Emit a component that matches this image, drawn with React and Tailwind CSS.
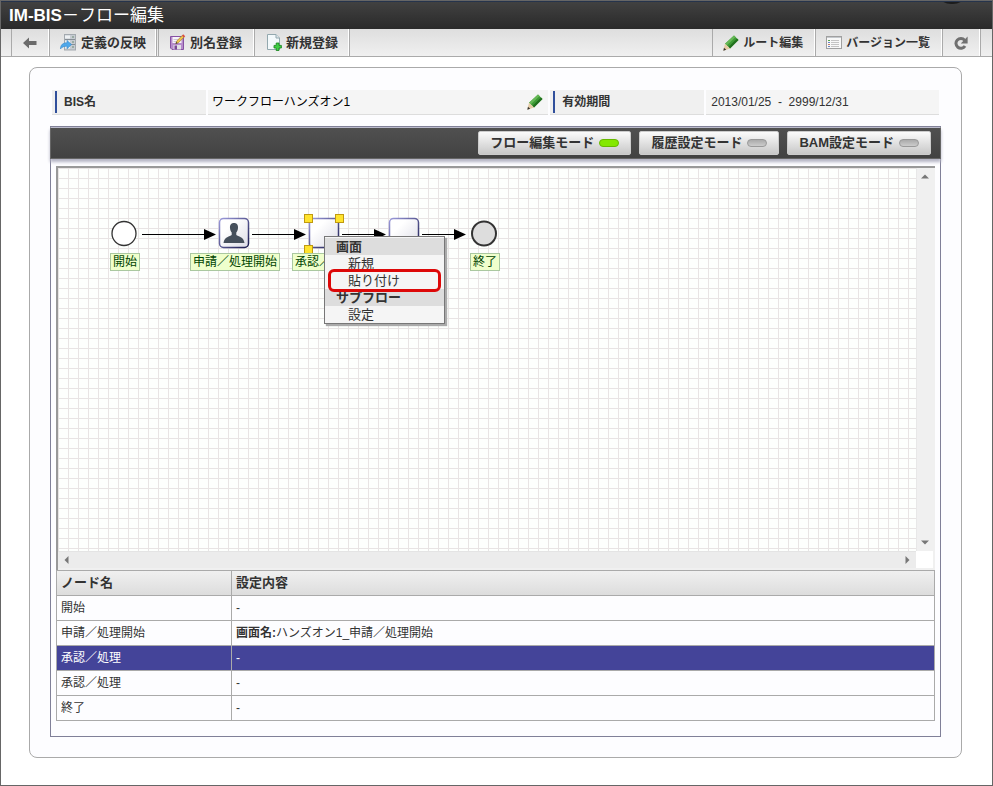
import { useState } from 'react';

const FONT = "font-['Liberation_Sans','Noto_Sans_CJK_JP',sans-serif]";

const NODES = [
  { id: 'start', type: 'start', x: 66,  label: '開始' },
  { id: 'apply', type: 'user',  x: 176, label: '申請／処理開始' },
  { id: 'appr1', type: 'box',   x: 266, label: '承認／処理' },
  { id: 'appr2', type: 'box',   x: 346, label: '承認／処理' },
  { id: 'end',   type: 'end',   x: 426, label: '終了' },
];

const ARROWS = [[84, 158], [194, 248], [284, 328], [364, 408]];

const ROWS = [
  { id: 'start', name: '開始' },
  { id: 'apply', name: '申請／処理開始', title: '画面名:', value: 'ハンズオン1_申請／処理開始' },
  { id: 'appr1', name: '承認／処理' },
  { id: 'appr2', name: '承認／処理' },
  { id: 'end',   name: '終了' },
];

const MODES = [
  { id: 'flow',    label: 'フロー編集モード' },
  { id: 'history', label: '履歴設定モード' },
  { id: 'bam',     label: 'BAM設定モード' },
];

/* ── Icons ── */
function BackIcon() {
  return (
    <svg width="14" height="12" viewBox="0 0 14 12">
      <path d="M0 6 6 0.5V4H13.5V8H6V11.5Z" fill="#6b6b6b" />
    </svg>
  );
}

function ServerIcon() {
  return (
    <svg width="17" height="17" viewBox="0 0 17 17">
      <rect x="4.5" y="0.5" width="11" height="15.5" fill="#c6ccd2" stroke="#a3a9af" />
      <path d="M5 5.5H15M5 10.5H15" stroke="#868e96" />
      <path d="M5 3H10M5 8H10M5 13H10" stroke="#eef1f4" strokeWidth="3" />
      <path d="M12 3H14M12 8H14M12 13H14" stroke="#6f8a74" />
      <path d="M0.4 15C0.6 10.6 3 8.8 7 8.8V6.4L11.6 10.6 7 14.8V12.2C3.8 12.2 2 13 0.4 15Z" fill="#4fa8ea" stroke="#3a8bcc" strokeWidth="0.6" />
    </svg>
  );
}

function SaveAsIcon() {
  return (
    <svg width="17" height="17" viewBox="0 0 17 17">
      <path d="M1.5 2.5H14.5V15.5H3L1.5 14Z" fill="#b68ccb" stroke="#8651a3" />
      <rect x="3.5" y="3" width="9" height="6" fill="#f7f4fa" />
      <path d="M4.5 5.5H9M4.5 7.5H7.5" stroke="#cfc4d8" />
      <rect x="4.5" y="11" width="7.5" height="4.5" fill="#e2e0e6" />
      <rect x="5.5" y="11.5" width="2.5" height="4" fill="#7a4796" />
      <path d="M6.8 9.6 7.8 7 13.2 1.4 15 3.2 9.4 8.8Z" fill="#f0c34a" stroke="#8f6f24" strokeWidth="0.6" />
      <path d="M13 1.4 14.2 0.2 16.2 2.2 15 3.4Z" fill="#dd4b40" />
      <path d="M6.6 9.8 7.3 8 8.5 9.2Z" fill="#333" />
    </svg>
  );
}

function NewIcon() {
  return (
    <svg width="16" height="17" viewBox="0 0 16 17">
      <path d="M1.5 0.5H10L13.5 4V15.5H1.5Z" fill="#f3f9fb" stroke="#93a8ae" />
      <path d="M10 0.5V4H13.5" fill="#dce7ec" stroke="#93a8ae" />
      <path d="M10.2 9H13V11.4H15.4V14H13V16.5H10.2V14H8V11.4H10.2Z" fill="#3fce45" stroke="#17821d" strokeWidth="0.8" />
    </svg>
  );
}

function PencilIcon() {
  return (
    <svg width="16" height="16" viewBox="0 0 16 16">
      <path d="M11 0.5 15.5 5 7 13.5 2 8.8Z" fill="#3d9a35" />
      <path d="M11 0.5 12.6 2.1 3.7 10.5 2 8.8Z" fill="#66b856" />
      <path d="M14 3.6 15.5 5 7 13.5 5.4 12Z" fill="#22701e" />
      <path d="M2 8.8 7 13.5 0.3 15.7Z" fill="#e5cba4" />
      <path d="M0.3 15.7 1 12.8 3.2 14.8Z" fill="#34312d" />
    </svg>
  );
}

function ListIcon() {
  return (
    <svg width="16" height="13" viewBox="0 0 16 13">
      <rect x="0.5" y="0.5" width="15" height="12" fill="#f8f8f8" stroke="#a0a0a0" />
      <path d="M1 1.5H15" stroke="#c4c8cc" />
      <path d="M5 4.5H13M5 6.5H13M5 8.5H13M5 10.5H13" stroke="#c4c4c4" />
      <path d="M2 4.5H4" stroke="#57a84c" />
      <path d="M2 6.5H4M2 10.5H4" stroke="#6a84c4" />
      <path d="M2 8.5H4" stroke="#c07a6a" />
    </svg>
  );
}

function ReloadIcon() {
  return (
    <svg width="14" height="14" viewBox="0 0 14 14">
      <path d="M10.6 4.2A4.9 4.9 0 1 0 11 10" fill="none" stroke="#707070" strokeWidth="3" />
      <path d="M13.6 0.6V7.4H6.8Z" fill="#707070" />
    </svg>
  );
}

function ToolButton({ icon, label, children, className = '' }) {
  return (
    <button
      type="button"
      aria-label={label}
      className={`flex items-center gap-1 h-full border-r border-[#aaa] shadow-[inset_-1px_0_0_#fff] font-bold text-[#333] whitespace-nowrap ${className}`}
    >
      {icon}
      {children}
    </button>
  );
}

function FlowDrawing() {
  return (
    <svg className="absolute inset-0 w-full h-full" aria-hidden="true">
      <defs>
        <linearGradient id="nodeFill" x1="0" y1="0" x2="1" y2="1">
          <stop offset="0.3" stopColor="#fff" />
          <stop offset="1" stopColor="#dcdce6" />
        </linearGradient>
        <linearGradient id="nodeLine" x1="0" y1="0" x2="1" y2="1">
          <stop offset="0" stopColor="#9c9cdc" />
          <stop offset="1" stopColor="#18184c" />
        </linearGradient>
      </defs>
      {ARROWS.map(([from, to]) => (
        <g key={from}>
          <path d={`M${from} 66.5H${to - 10}`} stroke="#000" />
          <path d={`M${to - 12} 61V72L${to} 66.5Z`} fill="#000" />
        </g>
      ))}
      {NODES.map(n => {
        if (n.type === 'start') return <circle key={n.id} cx={n.x} cy="65.5" r="12" fill="#fff" stroke="#333" strokeWidth="1.3" />;
        if (n.type === 'end') return <circle key={n.id} cx={n.x} cy="65.5" r="12" fill="#ddd" stroke="#333" strokeWidth="2" />;
        return (
          <g key={n.id}>
            <rect x={n.x - 14.5} y="50.5" width="29" height="29" rx="4" fill="url(#nodeFill)" stroke="url(#nodeLine)" strokeWidth="1.5" />
            {n.type === 'user' && (
              <path
                transform={`translate(${n.x - 11} 54)`}
                d="M11 1C7.8 1 6.8 3.2 7 6C7.1 8.4 8 9.6 8.7 10.6V13C7 14.6 1.2 14.6 0.5 21H21.5C20.8 14.6 15 14.6 13.3 13V10.6C14 9.6 14.9 8.4 15 6C15.2 3.2 14.2 1 11 1Z"
                fill="#46505c"
              />
            )}
          </g>
        );
      })}
      {[[246, 46], [277, 46], [246, 77]].map(([x, y]) => (
        <rect key={`${x}-${y}`} x={x + 0.5} y={y + 0.5} width="8" height="8" fill="#ffe42e" stroke="#c09a10" />
      ))}
    </svg>
  );
}

function ContextMenu() {
  const head = 'h-[17px] pl-[11px] bg-[#ddd] font-bold';
  const item = 'relative block w-full h-[17px] pl-[23px] text-left bg-[#f5f5f5]';
  return (
    <div className="absolute left-[266px] top-[68px] w-[121px] border border-[#777] bg-[#f5f5f5] pt-px text-[13px] leading-[17px] text-[#333] shadow-[2px_2px_1px_#aaa]">
      <div className={head}>画面</div>
      <button type="button" className={item}>新規</button>
      <button type="button" className={item}>
        貼り付け
        <span className="absolute left-[3px] right-[3px] -top-[3px] -bottom-[3px] z-10 rounded-md border-3 border-[#dd0808]" />
      </button>
      <div className={head}>サブフロー</div>
      <button type="button" className={item}>設定</button>
    </div>
  );
}

export default function App() {
  const [mode, setMode] = useState('flow');
  const [selected, setSelected] = useState('appr1');

  const labelCell = 'flex items-center h-[22px] my-px border-l-2 border-[#304f9b] ml-[3px] pl-[7px] font-bold';

  return (
    <div className={`min-h-screen bg-white border border-[#666] text-xs text-[#333] ${FONT}`}>

      {/* Title */}
      <header className="relative overflow-hidden flex items-center h-7 px-2 bg-linear-to-b from-[#414141] to-[#2a2a2a] border-t border-[#26344c]">
        <h1 className="text-[17px] leading-none text-white whitespace-nowrap"><b>IM-BIS</b>－フロー編集</h1>
        <span className="absolute right-6 -top-7 w-8 h-[30px] rounded-full bg-[#1c1c1c]" />
      </header>

      {/* Toolbar */}
      <nav className="flex h-7 bg-linear-to-b from-[#dedede] to-[#f0f0f0] border-b border-[#aaa]">
        <div className="flex border-l border-[#aaa] ml-[10px] text-[13px]">
          <ToolButton icon={<BackIcon />} label="戻る" className="pl-[11px] pr-3" />
          <ToolButton icon={<ServerIcon />} className="px-[10px]">定義の反映</ToolButton>
          <ToolButton icon={<SaveAsIcon />} className="border-l ml-px pl-[10px] pr-3">別名登録</ToolButton>
          <ToolButton icon={<NewIcon />} className="px-[11px]">新規登録</ToolButton>
        </div>
        <div className="flex border-l border-[#aaa] ml-auto mr-[11px]">
          <ToolButton icon={<PencilIcon />} className="pl-[10px] pr-3">ルート編集</ToolButton>
          <ToolButton icon={<ListIcon />} className="pl-[10px] pr-3">バージョン一覧</ToolButton>
          <ToolButton icon={<ReloadIcon />} label="更新" className="pl-[11px] pr-3" />
        </div>
      </nav>

      <main className="ml-7 mr-[30px] mt-[10px] mb-[27px] px-5 pt-[22px] pb-5 rounded-lg border border-[#aaa] bg-[#fdfdff]">

        {/* Summary */}
        <dl className="grid grid-cols-[154px_19fr_154px_13fr] gap-x-[2px] mx-[2px] h-6">
          <dt className="bg-[#f0f0f0] border-b border-[#ddd]"><div className={labelCell}>BIS名</div></dt>
          <dd className="flex items-center justify-between pl-1 pr-[5px] bg-[#f5f5f5] border-b border-[#ddd] text-black">
            ワークフローハンズオン1
            <button type="button" aria-label="BIS名を編集"><PencilIcon /></button>
          </dd>
          <dt className="bg-[#f0f0f0] border-b border-[#ddd]"><div className={labelCell}>有効期間</div></dt>
          <dd className="flex items-center pl-[5px] bg-[#f5f5f5] border-b border-[#ddd] whitespace-pre">2013/01/25  -  2999/12/31</dd>
        </dl>

        <section className="mt-3 pb-[15px] border border-[#808098]">

          {/* Modes */}
          <div className="flex items-center justify-end gap-2 h-8 -mx-px pr-[9px] bg-linear-to-b from-[#505050] to-[#424242] border border-[#666] border-t-[#bbc] shadow-[0_3px_3px_#b4b4c4]">
            {MODES.map(m => (
              <button
                key={m.id}
                type="button"
                aria-pressed={mode === m.id}
                onClick={() => setMode(m.id)}
                className="flex items-center gap-[5px] h-6 px-[11px] rounded-xs border border-[#ccc] bg-linear-to-b from-[#fbfbfb] to-[#c8c8c8] text-[13px] font-bold text-[#333] whitespace-nowrap"
              >
                {m.label}
                <span className={`w-5 h-2 rounded-full border ${mode === m.id ? 'bg-[#84e800] border-[#67b800]' : 'bg-linear-to-b from-[#aaa] to-[#ccc] border-[#999]'}`} />
              </button>
            ))}
          </div>

          {/* Canvas */}
          <div className="mx-[5px] mt-[7px] border-t-2 border-l-2 border-[#999] bg-[#f0f0f0] pb-[2px] pr-[2px]">
            <div className="flex">
              <div className="relative flex-1 h-[383px] overflow-hidden bg-[#fdfffd] bg-[linear-gradient(to_right,#e8e4e4_1px,transparent_1px),linear-gradient(to_bottom,#e8e4e4_1px,transparent_1px)] bg-size-[10px_10px]">
                <FlowDrawing />
                {NODES.map(n => (
                  <div key={n.id} className="absolute top-[85px] w-[100px] flex justify-center" style={{ left: n.x - 49 }}>
                    <span className="px-[2px] border border-[#aac8a0] bg-[#efffcc] leading-4 text-[#004400] whitespace-nowrap">{n.label}</span>
                  </div>
                ))}
                <ContextMenu />
              </div>
              <div className="flex flex-col items-center justify-between w-[17px] py-[6px] bg-[#f0f0f0] border-l border-[#e8e8e8]">
                <svg width="8" height="5" viewBox="0 0 8 5"><path d="M0 4.5 4 0.5 8 4.5Z" fill="#777" /></svg>
                <svg width="8" height="5" viewBox="0 0 8 5"><path d="M0 0.5H8L4 4.5Z" fill="#777" /></svg>
              </div>
            </div>
            <div className="flex h-[17px]">
              <div className="flex flex-1 items-center justify-between px-[6px] bg-[#ececec] border-t border-[#e4e4e4]">
                <svg width="5" height="8" viewBox="0 0 5 8"><path d="M4.5 0 0.5 4 4.5 8Z" fill="#777" /></svg>
                <svg width="5" height="8" viewBox="0 0 5 8"><path d="M0.5 0V8L4.5 4Z" fill="#777" /></svg>
              </div>
              <div className="w-[17px] bg-white" />
            </div>
          </div>

          {/* Nodes */}
          <div className="mx-[5px]">
            <table className="w-full table-fixed border-collapse text-left">
              <thead>
                <tr className="h-[25px] bg-linear-to-b from-[#f0f0f0] to-[#dcdcdc] text-[13px]">
                  <th className="w-[175px] px-1 py-0 border border-[#aaa] leading-4">ノード名</th>
                  <th className="px-1 py-0 border border-[#aaa] leading-4">設定内容</th>
                </tr>
              </thead>
              <tbody>
                {ROWS.map(r => (
                  <tr
                    key={r.id}
                    onClick={() => setSelected(r.id)}
                    className={`h-[25px] ${selected === r.id ? 'bg-[#444499] text-white' : ''}`}
                  >
                    <td className="px-1 py-0 border border-[#aaa] leading-4">{r.name}</td>
                    <td className="px-1 py-0 border border-[#aaa] leading-4">
                      {r.value ? <><b>{r.title}</b>{r.value}</> : '-'}
                    </td>
                  </tr>
                ))}
              </tbody>
            </table>
          </div>
        </section>
      </main>
    </div>
  );
}
